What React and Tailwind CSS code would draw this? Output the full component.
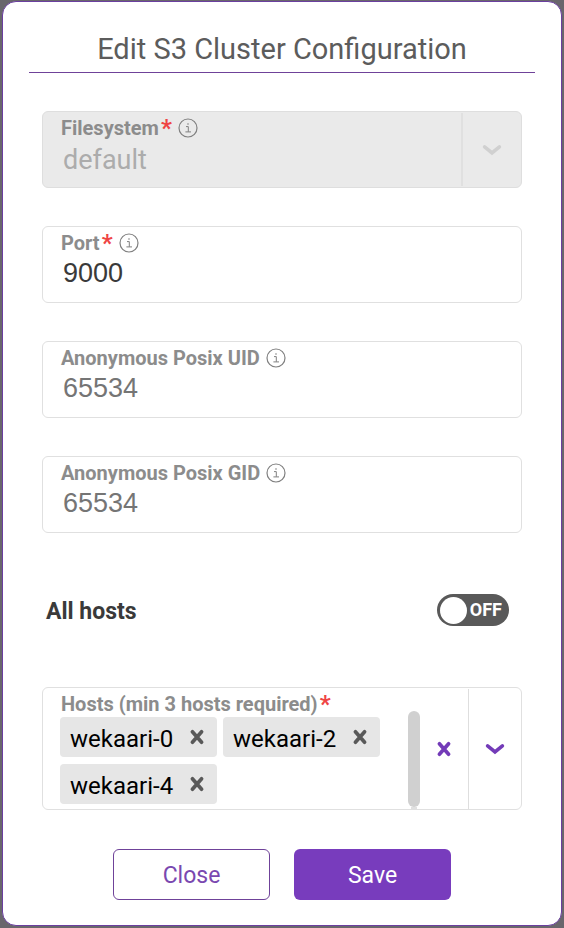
import { useState } from "react";

function InfoIcon() {
  return (
    <svg viewBox="0 0 20 20" className="h-5 w-5 shrink-0" fill="none" stroke="#808080" aria-hidden="true">
      <circle cx="10" cy="10" r="9" strokeWidth="1.2" />
      <path d="M8 8.6h2.3v5.2M7.4 13.9h5.6" strokeWidth="1" />
      <circle cx="10" cy="6" r="0.8" fill="#808080" stroke="none" />
    </svg>
  );
}

function Chevron() {
  return (
    <svg viewBox="0 0 20 12" className="h-3 w-5" fill="none" stroke="currentColor" strokeWidth="3.6" strokeLinecap="round" strokeLinejoin="miter" aria-hidden="true">
      <path d="M2.600 2.800L10 9l7.400-6.200" />
    </svg>
  );
}

function Cross() {
  return (
    <svg viewBox="0 0 16 16" className="h-4 w-4" fill="none" stroke="currentColor" strokeWidth="3.7" strokeLinecap="round" aria-hidden="true">
      <path d="M3.400 2.800l9.200 10.400M12.600 2.800l-9.200 10.400" />
    </svg>
  );
}

function FieldLabel({ htmlFor, text, required, info }) {
  return (
    <label htmlFor={htmlFor} className="flex h-5 items-center text-xl leading-5 font-bold whitespace-nowrap text-[#8c8c8c]">
      {text}
      {required && <span className="pl-0.5 text-2xl leading-5 text-[#ef4444]">*</span>}
      {info && (
        <span className="pl-1.5">
          <InfoIcon />
        </span>
      )}
    </label>
  );
}

function TextField({ id, label, required, defaultValue, tone }) {
  return (
    <div className="h-[77px] rounded-md border border-[#e0e0e0] px-[18px] pt-1.5">
      <FieldLabel htmlFor={id} text={label} required={required} info />
      <input
        id={id}
        type="text"
        defaultValue={defaultValue}
        className={`mt-1 block h-8 w-full bg-transparent pl-0.5 font-['Liberation_Sans',Arial,sans-serif] text-[27px] leading-8 outline-none ${tone}`}
      />
    </div>
  );
}

function Chip({ name, onRemove }) {
  return (
    <span className="flex h-10 w-[157px] items-center justify-between rounded-sm bg-[#e6e6e6] pr-3 pl-2.5 text-2xl leading-9 text-black">
      <span className="pt-1">{name}</span>
      <button type="button" aria-label={`Remove ${name}`} onClick={onRemove} className="text-[#595959]">
        <Cross />
      </button>
    </span>
  );
}

export default function App() {
  const [hosts, setHosts] = useState(["wekaari-0", "wekaari-2", "wekaari-4"]);
  const [allHosts, setAllHosts] = useState(false);

  return (
    <div className="min-h-screen bg-[#69666c] px-0.5 pt-px pb-0.5 font-[Roboto,'Noto_Sans',sans-serif]">
      <form
        onSubmit={(event) => event.preventDefault()}
        className="rounded-[14px] border border-[#6b3fa0] bg-white pb-[25px]"
      >
        <h1 className="mx-[26px] border-b border-[#6f4299] pt-7 pb-1 text-center text-[29px] leading-[38px] font-normal text-[#5c5c5c]">
          Edit S3 Cluster Configuration
        </h1>

        <div className="px-[39px] pt-[38px]">
          <div className="flex flex-col gap-[38px]">
            <div className="flex h-[77px] rounded-md border border-[#dedede] bg-[#eaeaea]">
              <div className="min-w-0 flex-1 px-[18px] pt-1.5">
                <FieldLabel htmlFor="filesystem" text="Filesystem" required info />
                <select
                  id="filesystem"
                  disabled
                  className="mt-1 block h-9 w-full appearance-none bg-transparent pl-0.5 text-[27px] leading-9 text-[#acacac] opacity-100"
                >
                  <option>default</option>
                </select>
              </div>
              <div className="my-px flex w-[60px] items-center justify-center border-l-2 border-[#e0e0e0] text-[#d0d0d0]">
                <Chevron />
              </div>
            </div>

            <TextField id="port" label="Port" required defaultValue="9000" tone="text-[#3a3a3a]" />
            <TextField id="uid" label="Anonymous Posix UID" defaultValue="65534" tone="text-[#757575]" />
            <TextField id="gid" label="Anonymous Posix GID" defaultValue="65534" tone="text-[#757575]" />
          </div>

          <div className="mt-[61px] flex h-8 items-center justify-between pr-[13px] pl-1">
            <label htmlFor="all-hosts" className="pt-1 text-[23px] leading-8 font-bold text-[#3a3a3a]">
              All hosts
            </label>
            <label className="flex h-8 w-[72px] cursor-pointer items-center justify-between rounded-full bg-[#595959] pr-[7px] pl-[3px]">
              <input
                id="all-hosts"
                type="checkbox"
                role="switch"
                checked={allHosts}
                onChange={(event) => setAllHosts(event.target.checked)}
                className="peer h-[27px] w-[27px] appearance-none rounded-full bg-white checked:order-2"
              />
              <span className="text-lg leading-8 font-bold text-white">{allHosts ? "ON" : "OFF"}</span>
            </label>
          </div>

          <div className="mt-[61px] flex h-[123px] rounded-md border border-[#e0e0e0]">
            <div className="min-w-0 flex-1 pt-1.5 pl-[17px]">
              <div className="pl-px">
                <FieldLabel htmlFor="hosts-open" text="Hosts (min 3 hosts required)" required />
              </div>
              <div className="mt-[3px] flex flex-wrap gap-x-1.5 gap-y-[7px]">
                {hosts.map((host) => (
                  <Chip key={host} name={host} onRemove={() => setHosts(hosts.filter((item) => item !== host))} />
                ))}
              </div>
            </div>
            <div className="flex w-3 flex-col items-center pt-[23px]">
              <div className="h-24 w-3 shrink-0 rounded-full bg-[#d0d0d0]" />
              <div className="w-1.5 flex-1 bg-[#e0e0e0]" />
            </div>
            <button
              type="button"
              aria-label="Clear hosts"
              onClick={() => setHosts([])}
              className="flex w-12 items-center justify-center text-[#733bb8]"
            >
              <Cross />
            </button>
            <button
              id="hosts-open"
              type="button"
              aria-label="Show hosts"
              className="mt-px flex w-[53px] items-center justify-center border-l border-[#dedede] text-[#733bb8]"
            >
              <Chevron />
            </button>
          </div>

          <div className="mt-[39px] flex justify-center gap-6">
            <button type="button" className="h-[51px] w-[157px] rounded-md border border-[#6f4299] pt-1 text-[23px] text-[#7a48b0]">
              Close
            </button>
            <button type="submit" className="h-[51px] w-[157px] rounded-md bg-[#783cbd] pt-1 text-[23px] text-white">
              Save
            </button>
          </div>
        </div>
      </form>
    </div>
  );
}
